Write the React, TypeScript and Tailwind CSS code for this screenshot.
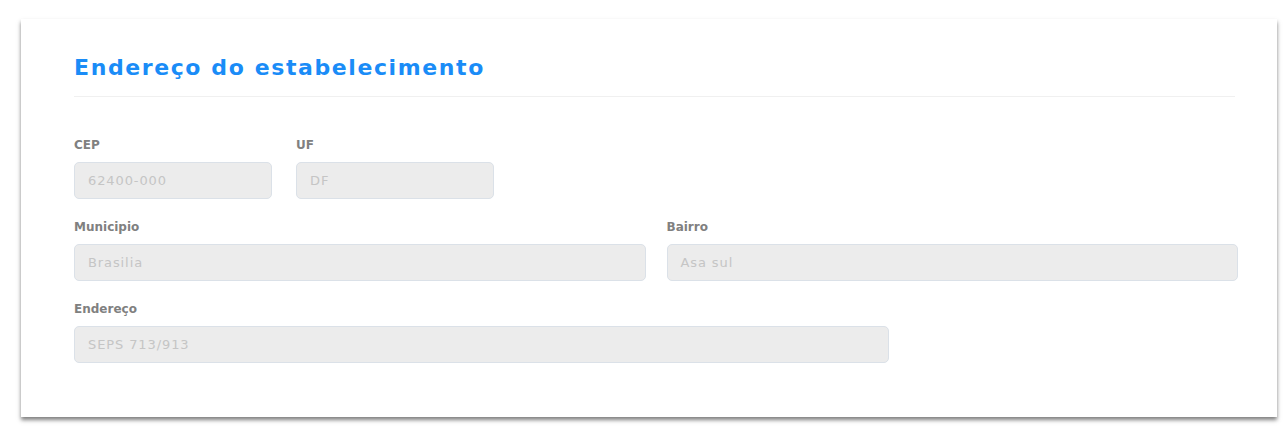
import React from "react";

const FONT = { fontFamily: '"DejaVu Sans", "Open Sans", sans-serif' };

function Field({ label, value, className }: { label: string; value: string; className?: string }) {
  return (
    <div className={className}>
      <div className="text-[12px] leading-[14px] font-bold text-[#808080] mb-[10px]" style={FONT}>
        {label}
      </div>
      <div className="h-[37px] rounded-[5px] bg-[#ececec] border border-[#dbe1e8] flex items-center pl-[13px] text-[13px] tracking-[0.9px] text-[#c5c5c5]" style={FONT}>
        {value}
      </div>
    </div>
  );
}

export default function App() {
  return (
    <div className="w-[1286px] h-[427px] bg-white pt-[19px] pl-[21px] overflow-hidden">
      <div className="w-[1256px] h-[398px] bg-white shadow-[0_3px_4px_rgba(0,0,0,0.5)] pl-[53px] pt-[35px]">
        <div className="w-[1161px] border-b border-[#f0f0f0] pb-[14px]">
          <h2 className="text-[22px] leading-[28px] font-bold text-[#1a8cf7] tracking-[1.6px]" style={FONT}>
            Endereço do estabelecimento
          </h2>
        </div>
        <div className="w-[1164px] pt-[41px] flex flex-col gap-[21px]">
          <div className="flex gap-[24px]">
            <Field label="CEP" value="62400-000" className="w-[198px]" />
            <Field label="UF" value="DF" className="w-[198px]" />
          </div>
          <div className="grid grid-cols-2 gap-[21px]">
            <Field label="Municipio" value="Brasilia" />
            <Field label="Bairro" value="Asa sul" />
          </div>
          <div>
            <Field label="Endereço" value="SEPS 713/913" className="w-[815px]" />
          </div>
        </div>
      </div>
    </div>
  );
}
